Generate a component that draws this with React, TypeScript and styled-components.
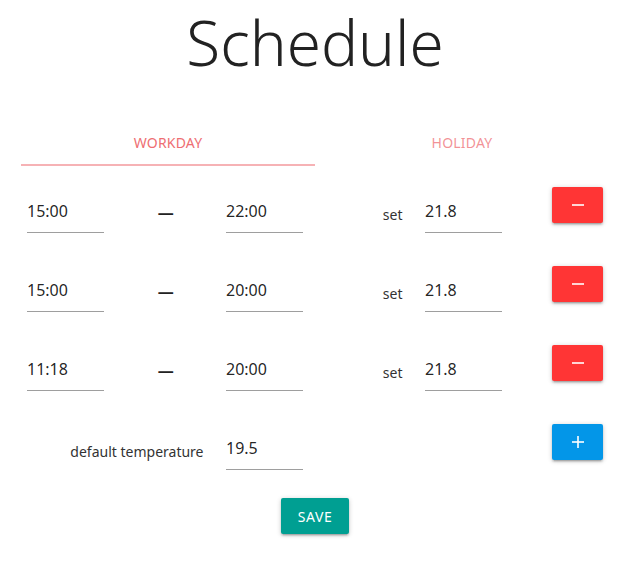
import React, { useState } from 'react';
import styled, { createGlobalStyle } from 'styled-components';

type Period = { from: string; to: string; temp: string };

const initialPeriods: Period[] = [
  { from: '15:00', to: '22:00', temp: '21.8' },
  { from: '15:00', to: '20:00', temp: '21.8' },
  { from: '11:18', to: '20:00', temp: '21.8' },
];

const GlobalStyle = createGlobalStyle`
  body {
    margin: 0;
    background: #fff;
    font-family: 'Noto Sans', 'Open Sans', sans-serif;
    color: rgba(0, 0, 0, 0.87);
  }
`;

const App: React.FC = () => {
  const [tab, setTab] = useState<'workday' | 'holiday'>('workday');
  const [periods, setPeriods] = useState(initialPeriods);
  const [defaultTemp, setDefaultTemp] = useState('19.5');

  const update = (i: number, key: keyof Period, value: string) => {
    setPeriods(periods.map((p, idx) => (idx === i ? { ...p, [key]: value } : p)));
  };

  const removePeriod = (i: number) => {
    setPeriods(periods.filter((_, idx) => idx !== i));
  };

  const addPeriod = () => {
    setPeriods([...periods, { from: '00:00', to: '00:00', temp: defaultTemp }]);
  };

  return (
    <Page>
      <GlobalStyle />
      <Title>Schedule</Title>
      <Tabs>
        <Tab active={tab === 'workday'} onClick={() => setTab('workday')}>
          Workday
        </Tab>
        <Tab active={tab === 'holiday'} onClick={() => setTab('holiday')}>
          Holiday
        </Tab>
      </Tabs>

      {periods.map((p, i) => (
        <Row key={i}>
          <Cell>
            <TextInput value={p.from} onChange={(e) => update(i, 'from', e.target.value)} />
          </Cell>
          <DashCell>—</DashCell>
          <Cell>
            <TextInput value={p.to} onChange={(e) => update(i, 'to', e.target.value)} />
          </Cell>
          <Label>set</Label>
          <Cell>
            <TextInput value={p.temp} onChange={(e) => update(i, 'temp', e.target.value)} />
          </Cell>
          <ButtonCell>
            <Button color="#ff3535" onClick={() => removePeriod(i)}>
              <svg width="14" height="14" viewBox="0 0 14 14">
                <line x1="1" y1="7" x2="13" y2="7" stroke="#fff" strokeWidth="1.6" />
              </svg>
            </Button>
          </ButtonCell>
        </Row>
      ))}

      <Row>
        <DefaultLabel>default temperature</DefaultLabel>
        <Cell>
          <TextInput value={defaultTemp} onChange={(e) => setDefaultTemp(e.target.value)} />
        </Cell>
        <Spacer />
        <ButtonCell>
          <Button color="#0396e8" onClick={addPeriod}>
            <svg width="14" height="14" viewBox="0 0 14 14">
              <line x1="1" y1="7" x2="13" y2="7" stroke="#fff" strokeWidth="1.6" />
              <line x1="7" y1="1" x2="7" y2="13" stroke="#fff" strokeWidth="1.6" />
            </svg>
          </Button>
        </ButtonCell>
      </Row>

      <Footer>
        <SaveButton>Save</SaveButton>
      </Footer>
    </Page>
  );
};

const Page = styled.div`
  width: 597px;
  margin-left: 16.5px;
  padding-bottom: 30px;
`;

const Title = styled.h1`
  margin: 0;
  height: 118px;
  text-align: center;
  font-size: 62px;
  font-weight: 300;
  line-height: 84px;
  color: #222;
`;

const Tabs = styled.div`
  display: grid;
  grid-template-columns: 1fr 1fr;
  margin: 0 4.5px;
  height: 48px;
`;

const Tab = styled.div<{ active: boolean }>`
  display: flex;
  align-items: center;
  justify-content: center;
  padding-top: 2px;
  font-size: 14px;
  letter-spacing: 0.2px;
  text-transform: uppercase;
  color: ${(p) => (p.active ? '#ee6e73' : 'rgba(238, 110, 115, 0.75)')};
  border-bottom: 2px solid ${(p) => (p.active ? '#f6b2b5' : 'transparent')};
  cursor: pointer;
`;

const Row = styled.div`
  display: grid;
  grid-template-columns: repeat(6, 1fr);
  align-items: start;
  height: 79px;
  ${Tabs} + & {
    margin-top: 16px;
  }
`;

const Cell = styled.div`
  padding: 8px 12px 0 10.5px;
`;

const TextInput = styled.input`
  box-sizing: border-box;
  width: 100%;
  height: 43px;
  padding: 0;
  border: none;
  border-bottom: 1px solid #9e9e9e;
  outline: none;
  background: transparent;
  font-family: inherit;
  font-size: 16px;
  color: rgba(0, 0, 0, 0.87);
`;

const DashCell = styled.div`
  padding-top: 19px;
  text-align: center;
  font-size: 16px;
  font-weight: 700;
  color: #222;
`;

const Label = styled.div`
  padding: 23px 12px 0 10.5px;
  text-align: right;
  font-size: 14px;
  color: #333;
`;

const DefaultLabel = styled(Label)`
  grid-column: span 2;
`;

const Spacer = styled.div`
  grid-column: span 2;
`;

const ButtonCell = styled.div`
  display: flex;
  justify-content: flex-end;
  padding: 5px 10.5px 0;
`;

const Button = styled.button<{ color: string }>`
  display: flex;
  align-items: center;
  justify-content: center;
  width: 51px;
  height: 36px;
  padding: 0;
  border: none;
  border-radius: 2px;
  background: ${(p) => p.color};
  box-shadow: 0 2px 2px 0 rgba(0, 0, 0, 0.14), 0 3px 1px -2px rgba(0, 0, 0, 0.12),
    0 1px 5px 0 rgba(0, 0, 0, 0.2);
  cursor: pointer;
`;

const Footer = styled.div`
  display: flex;
  justify-content: center;
  margin-top: 0;
`;

const SaveButton = styled.button`
  height: 36px;
  padding: 0 17px;
  border: none;
  border-radius: 2px;
  background: #009f92;
  color: #fff;
  font-family: inherit;
  font-size: 14px;
  letter-spacing: 0.6px;
  text-transform: uppercase;
  box-shadow: 0 2px 2px 0 rgba(0, 0, 0, 0.14), 0 3px 1px -2px rgba(0, 0, 0, 0.12),
    0 1px 5px 0 rgba(0, 0, 0, 0.2);
  cursor: pointer;
`;

export default App;
